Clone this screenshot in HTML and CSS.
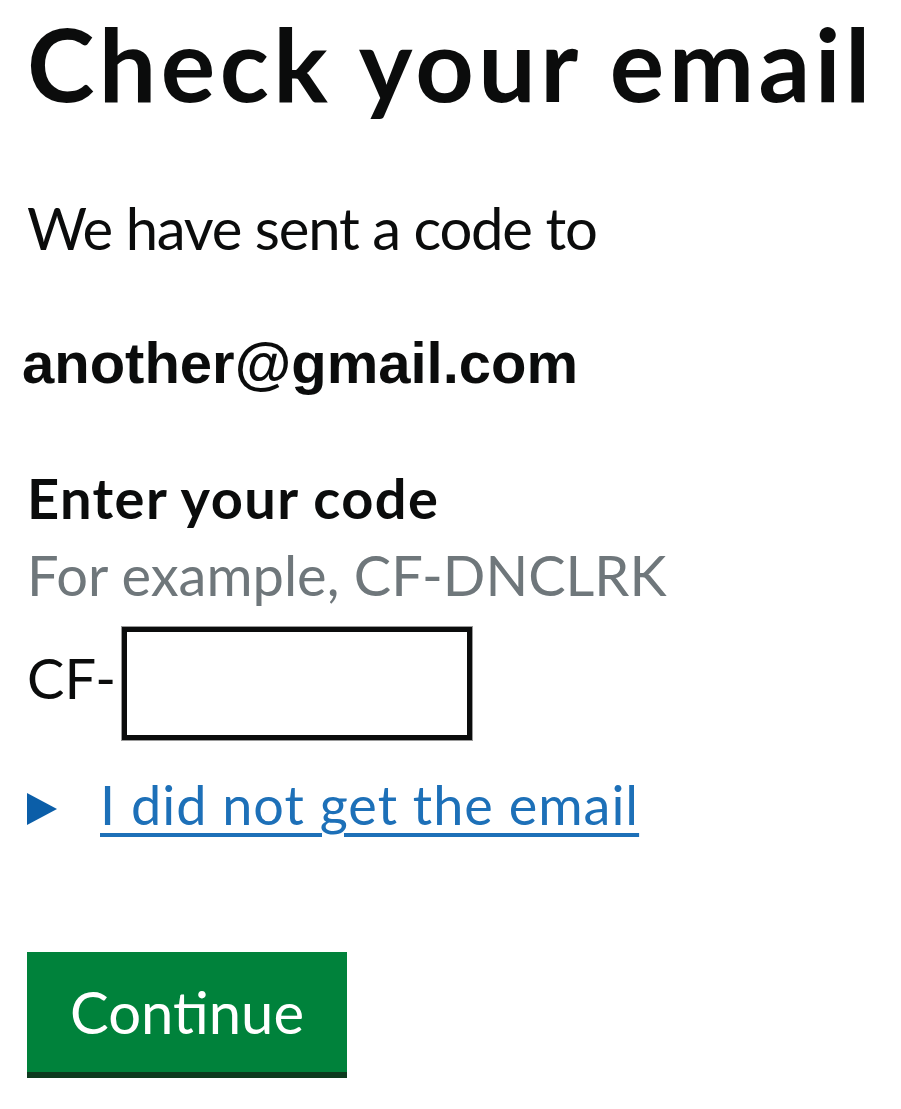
FILE: index.html
```html
<!DOCTYPE html>
<html lang="en">
<head>
<meta charset="utf-8">
<title>Check your email</title>
<link rel="stylesheet" href="styles.css">
</head>
<body>
<main class="page">
  <h1 class="title">Check your email</h1>
  <p class="body">We have sent a code to</p>
  <p class="email">another@gmail.com</p>
  <div class="field">
    <label class="label" for="code">Enter your code</label>
    <div class="hint">For example, CF-DNCLRK</div>
    <div class="input-row">
      <span class="prefix">CF-</span>
      <input class="input" id="code" type="text">
    </div>
  </div>
  <div class="details">
    <span class="arrow"></span>
    <a class="link" href="#">I did not get the email</a>
  </div>
  <button class="button" type="button">Continue</button>
</main>
</body>
</html>
```

FILE: styles.css
```css
html, body {
  margin: 0;
  padding: 0;
  background: #ffffff;
}
.page {
  display: flex;
  flex-direction: column;
  align-items: flex-start;
  padding: 0 0 0 27px;
  font-family: Lato, "Open Sans", sans-serif;
  color: #0b0c0c;
}
.title {
  margin: 2px 0 0 0;
  font-size: 102px;
  font-weight: 700;
  line-height: 122px;
  letter-spacing: 4.4px;
  white-space: nowrap;
}
.body {
  margin: 69px 0 0 0;
  font-size: 58px;
  line-height: 70px;
  letter-spacing: -1.2px;
  white-space: nowrap;
}
.email {
  margin: 65px 0 0 -5px;
  font-family: "Liberation Sans", Arial, sans-serif;
  font-weight: 700;
  font-size: 58px;
  line-height: 70px;
}
.field {
  display: flex;
  flex-direction: column;
  margin-top: 65px;
}
.label {
  font-size: 56px;
  font-weight: 700;
  line-height: 70px;
  letter-spacing: 1.4px;
}
.hint {
  margin-top: 7px;
  font-size: 56px;
  line-height: 70px;
  color: #6f777b;
  white-space: nowrap;
}
.input-row {
  display: flex;
  align-items: flex-start;
  margin-top: 17px;
}
.prefix {
  font-size: 56px;
  line-height: 60px;
  margin: 21px 6px 0 0;
}
.input {
  box-sizing: border-box;
  width: 350px;
  height: 113px;
  border: 5px solid #0b0c0c;
  outline: 1px solid #9a9a9a;
  background: #fff;
  margin: 0;
  padding: 0;
}
.details {
  display: flex;
  align-items: center;
  margin-top: 30px;
}
.arrow {
  width: 0;
  height: 0;
  border-top: 16px solid transparent;
  border-bottom: 16px solid transparent;
  border-left: 30px solid #0b5ea8;
  margin: 8px 43px 0 0;
}
.link {
  font-size: 54px;
  line-height: 70px;
  letter-spacing: 1px;
  color: #1d70b8;
  text-decoration: underline;
  text-decoration-thickness: 4px;
  text-underline-offset: 8px;
  white-space: nowrap;
}
.button {
  margin-top: 112px;
  width: 320px;
  height: 126px;
  background: #00823b;
  color: #ffffff;
  border: 0;
  border-bottom: 6px solid #0d3a1e;
  font-family: Lato, "Open Sans", sans-serif;
  font-size: 58px;
  line-height: 60px;
  padding: 0;
}
```
